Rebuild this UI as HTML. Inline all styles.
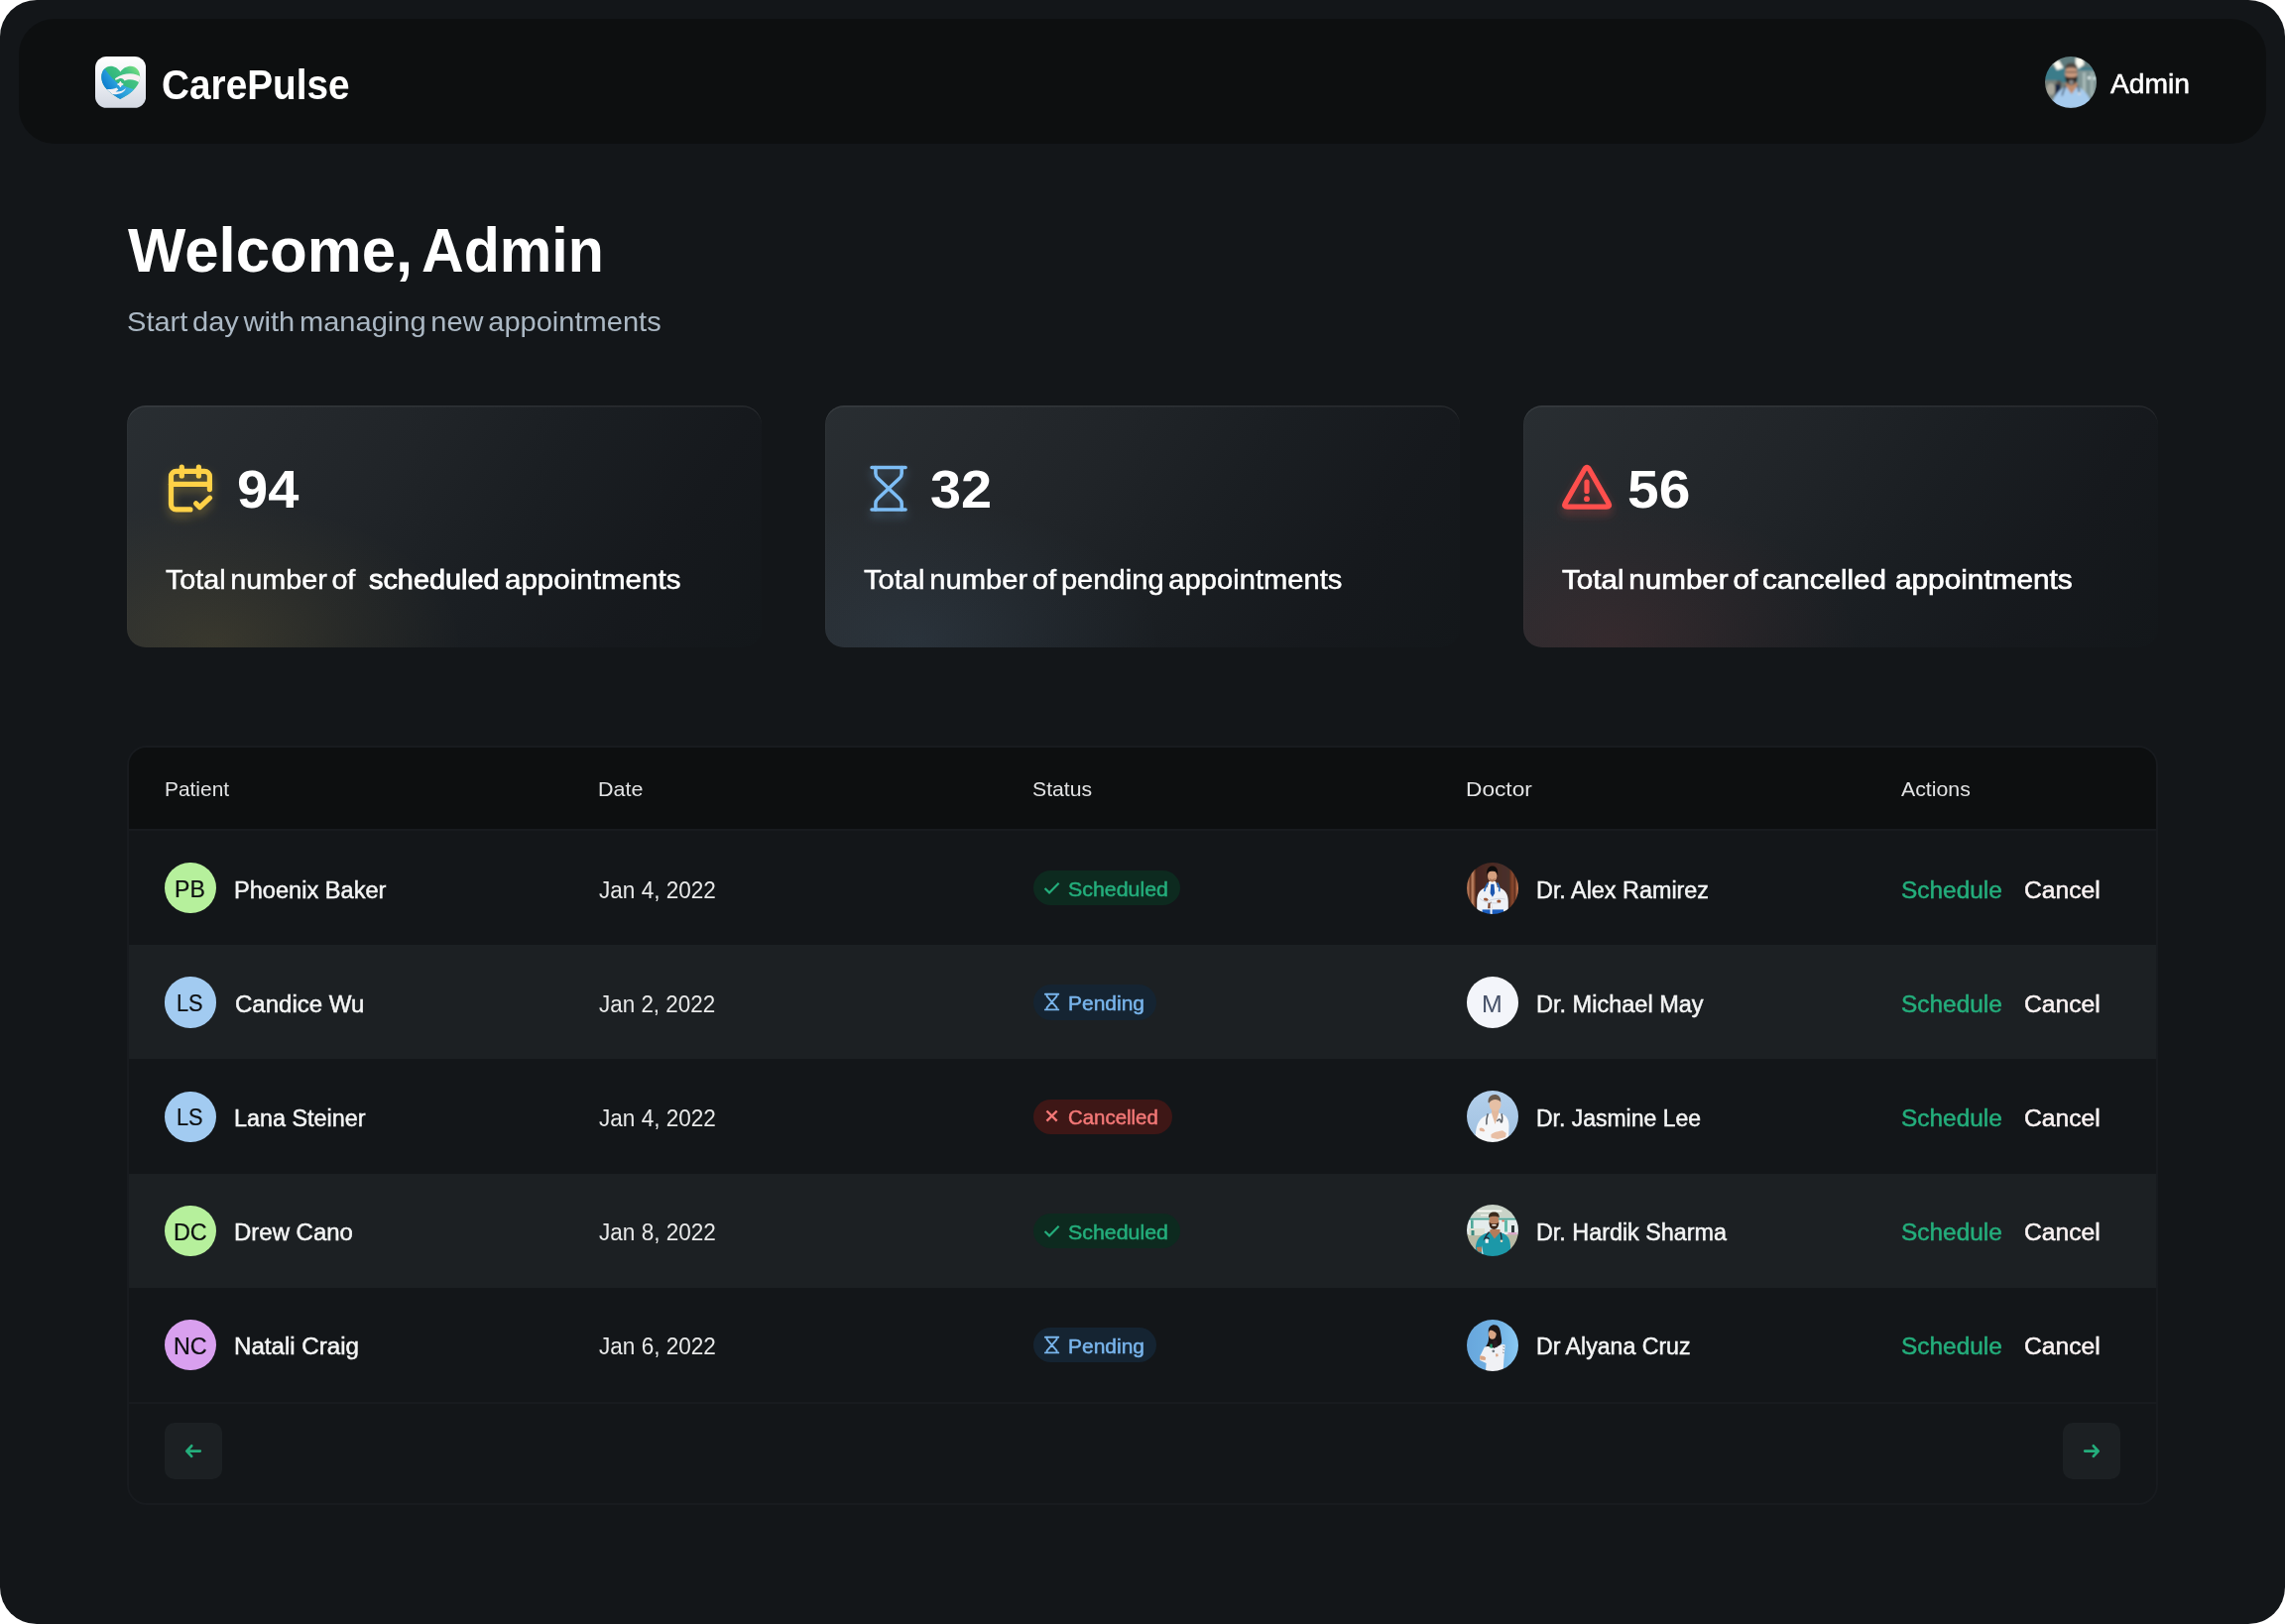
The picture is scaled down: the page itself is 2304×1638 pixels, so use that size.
<!DOCTYPE html>
<html lang="en">
<head>
<meta charset="utf-8">
<title>CarePulse Admin</title>
<style>
*{box-sizing:border-box;margin:0;padding:0}
html,body{width:2304px;height:1638px;background:#fff;overflow:hidden}
body{font-family:"Liberation Sans",sans-serif;color:#fff}
.abs{position:absolute}
#page{position:absolute;left:0;top:0;width:2304px;height:1638px;background:#131619;border-radius:37px;overflow:hidden}
#hdr{position:absolute;left:19px;top:19px;width:2266px;height:126px;background:#0D0F10;border-radius:36px}
.t{position:absolute;white-space:nowrap;line-height:1;transform-origin:0 0}
.card{position:absolute;top:409.3px;width:640px;height:243.4px;border-radius:19px;overflow:hidden;background:linear-gradient(122deg,#292E32 0%,#25292D 20%,#202428 40%,#1A1E22 60%,#16191D 80%,#13171A 100%)}
.card .glow{position:absolute;left:-160px;top:95px;width:500px;height:290px}
.card .hl{position:absolute;left:0;top:0;width:100%;height:100%;border-radius:19px;box-shadow:inset 0 1.6px 0 rgba(255,255,255,.075),inset 1px 0 0 rgba(255,255,255,.02)}
#tbl{position:absolute;left:128px;top:752px;width:2048px;height:766px;border-radius:20px;border:2px solid #181B1F;overflow:hidden;background:#131619}
#thead{position:absolute;left:0;top:0;width:100%;height:84px;background:#0D0F10;border-bottom:2px solid #181B1F}
.row{position:absolute;left:0;width:100%;height:115.4px}
.row.alt{background:#1C2023}
#tfoot{position:absolute;left:0;top:660px;width:100%;height:104px;border-top:2px solid #181B1F}
.av{position:absolute;width:51.2px;height:51.2px;border-radius:50%;overflow:hidden}
.badge{position:absolute;height:35.2px;border-radius:18px}
.btn{position:absolute;top:1434.8px;width:57.6px;height:57.6px;border-radius:10px;background:#1C2023}
</style>
</head>
<body>
<div id="page">
<div id="hdr"></div>
<svg class="abs" style="left:95.9px;top:57px" width="51.2" height="51.8" viewBox="0 0 51.2 51.8">
<defs>
<linearGradient id="lgbg" x1="0" y1="0" x2="0" y2="1"><stop offset="0" stop-color="#FFFFFF"/><stop offset="0.45" stop-color="#EEF0F5"/><stop offset="1" stop-color="#D3D8E2"/></linearGradient>
<linearGradient id="lgg" gradientUnits="userSpaceOnUse" x1="22" y1="30" x2="43" y2="10"><stop offset="0" stop-color="#2DB47B"/><stop offset="0.6" stop-color="#45C383"/><stop offset="1" stop-color="#7FE27F"/></linearGradient>
<linearGradient id="lgb" gradientUnits="userSpaceOnUse" x1="9" y1="36" x2="30" y2="22"><stop offset="0" stop-color="#0673CC"/><stop offset="0.6" stop-color="#2A9FDB"/><stop offset="1" stop-color="#3DB2E2"/></linearGradient>
<clipPath id="heartc"><path d="M25.4 42.9C19 39.6 6.3 32 6.3 20.8C6.3 14 10.6 9.8 15.6 9.8C19.8 9.8 23.2 12.2 25.4 15.6C27.6 12.2 31.4 9.8 36 9.8C41 9.8 45.2 14 45.2 20.6C45.2 31 33 39.4 25.4 42.9Z"/></clipPath>
</defs>
<rect x="0" y="0" width="51.2" height="51.8" rx="11.5" fill="url(#lgbg)"/>
<g clip-path="url(#heartc)">
<rect x="0" y="0" width="52" height="52" fill="url(#lgg)"/>
<path d="M9.9 12.4C15 20 20 25.5 25.4 28C30 30.3 35 32 39.6 33.2L46 36 30 50H0V8Z" fill="url(#lgb)"/>
<path d="M46 20.6C41 16.6 30.5 15.2 20.3 22C19.6 23.2 20.4 24 21.6 23.5C23.2 22.6 24.6 21.9 26 21.9C27.8 21.9 28.8 23 29.5 24.4C34 22.3 40.5 22.6 46 27.4Z" fill="#F7F0F2"/>
<path d="M3 31.2C9 33.6 16.5 33.6 21.6 31.5L23.4 33.4 20.6 35.5C24.4 35.8 28.2 34.7 30.9 32C29.8 36.4 23.5 39.6 13.5 37.9L6 42Z" fill="#F1F0F4"/>
<path d="M25.4 25.1 26.3 27.1 28.3 28 26.3 28.9 25.4 30.9 24.5 28.9 22.5 28 24.5 27.1Z" fill="#F7F0F2" stroke="#F7F0F2" stroke-width="0.9" stroke-linejoin="round"/>
</g>
</svg>

<svg class="abs" style="left:2062.3px;top:57.3px" width="52" height="52" viewBox="0 0 52 52">
<defs><clipPath id="cav0"><circle cx="26" cy="26" r="26"/></clipPath><filter id="bl0" x="-10%" y="-10%" width="120%" height="120%"><feGaussianBlur stdDeviation="0.85"/></filter></defs>
<g clip-path="url(#cav0)"><g filter="url(#bl0)">
<rect x="-2" y="-2" width="56" height="56" fill="#3B7B8A"/>
<rect x="-2" y="-2" width="56" height="13" fill="#5E7C7E"/>
<rect x="-2" y="26" width="56" height="28" fill="#6F7E7B"/>
<rect x="33" y="14" width="21" height="30" fill="#7F9494"/><rect x="38" y="16" width="3" height="24" fill="#A9BBB9"/><rect x="46" y="16" width="2.5" height="24" fill="#A3B5B3"/>
<rect x="-2" y="24" width="14" height="24" fill="#77807A"/><ellipse cx="6" cy="33" rx="4.5" ry="6" fill="#A9A79C"/><ellipse cx="14" cy="27" rx="2.6" ry="3" fill="#5A534C"/>
<path d="M8.3 6.5 14 3.7 18.6 11.5 12 13.8Z" fill="#FCFCF2"/>
<path d="M30.8 1.3 38 1.5 39.7 8 33.5 12.5 31 9Z" fill="#FCFCF2"/>
<circle cx="44.5" cy="21.5" r="1.6" fill="#EAF6F6"/><circle cx="50" cy="22" r="1.5" fill="#DFF3F3"/>
<rect x="10" y="28" width="6" height="12" fill="#1E2A44"/>
<path d="M6.9 52C7 42 12 35 20.5 30.5L26.5 29 33 30.5C41 34 47 42 47.2 52Z" fill="#A6CBEE"/>
<path d="M20.8 29.5 26.8 38 32.8 29.5 32 26H21.6Z" fill="#BF8B6B"/>
<ellipse cx="26.5" cy="16.5" rx="6.3" ry="8.6" fill="#C99A7E"/>
<path d="M20.2 13C20 8 23 6.6 26.6 6.6C30.4 6.6 33 8.4 32.8 13C31 10.6 22 10.6 20.2 13Z" fill="#4E4641"/>
<path d="M20.5 19.5C22 21.5 31 21.5 32.6 19.5C33 25 30 29 26.5 29C23 29 20 25 20.5 19.5Z" fill="#2A201C"/>
<rect x="24.3" y="24" width="4.4" height="4.5" fill="#8A8A8A"/>
<path d="M20.6 15.7H32.6" stroke="#2B2523" stroke-width="0.9"/>
<path d="M21 29.5C19.5 33 17.5 36 17.3 39.5M32.6 29.5C34 32 34.6 34 34.6 36.5" stroke="#27364A" stroke-width="1.3" fill="none"/>
<circle cx="34.6" cy="37.4" r="1.4" fill="#D8DCE0"/>
</g></g></svg>

<svg width="0" height="0" style="position:absolute"><defs>
<filter id="gy" x="-40%" y="-40%" width="180%" height="200%"><feDropShadow dx="0" dy="5" stdDeviation="5" flood-color="#FFD147" flood-opacity="0.33"/></filter>
<filter id="gb" x="-40%" y="-40%" width="180%" height="200%"><feDropShadow dx="0" dy="5" stdDeviation="5" flood-color="#79B5EC" flood-opacity="0.33"/></filter>
<filter id="gr" x="-40%" y="-40%" width="180%" height="200%"><feDropShadow dx="0" dy="5" stdDeviation="5" flood-color="#FF4F4E" flood-opacity="0.33"/></filter>
</defs></svg>
<div class="card" style="left:128px"><div class="glow" style="background:radial-gradient(ellipse 50% 50% at 50% 50%,rgba(255,209,71,.10),rgba(255,209,71,.04) 55%,rgba(255,209,71,0) 100%)"></div><div class="hl"></div></div>
<div class="card" style="left:832px"><div class="glow" style="background:radial-gradient(ellipse 50% 50% at 50% 50%,rgba(121,181,236,.085),rgba(121,181,236,.035) 55%,rgba(121,181,236,0) 100%)"></div><div class="hl"></div></div>
<div class="card" style="left:1536px"><div class="glow" style="background:radial-gradient(ellipse 50% 50% at 50% 50%,rgba(255,79,78,.085),rgba(255,79,78,.035) 55%,rgba(255,79,78,0) 100%)"></div><div class="hl"></div></div>
<svg class="abs" style="left:0;top:400px" width="2304" height="200" viewBox="0 400 2304 200" fill="none" stroke-linecap="round" stroke-linejoin="round">
<g stroke="#FFD147" stroke-width="5.2" filter="url(#gy)"><path d="M183.3 471.2V480M200.4 471.2V480"/><path d="M211.4 493.6V480.6a5.2 5.2 0 0 0-5.2-5.2H177.7a5.2 5.2 0 0 0-5.2 5.2V508.7a5.2 5.2 0 0 0 5.2 5.2H191.9"/><path d="M172.5 488.3H211.4"/><path d="M197.6 507.8 201.5 511.6 211.6 502.2"/></g>
<g stroke="#7DBDF5" stroke-width="3.5" filter="url(#gb)"><path d="M879 471.4H913.1M879 514.1H913.1"/><path d="M882.9 471.4V477.5Q882.9 480.5 885.2 482.5L896 492.75 906.9 482.5Q909.2 480.5 909.2 477.5V471.4"/><path d="M882.9 514.1V508Q882.9 505 885.2 503L896 492.75 906.9 503Q909.2 505 909.2 508V514.1"/></g>
<g stroke="#FF4F4E" stroke-width="5.2" filter="url(#gr)"><path d="M1580.53 511.1H1619.67Q1624 511.1 1621.86 507.34L1602.68 473.72Q1600.1 469.2 1597.52 473.72L1578.35 507.34Q1576.2 511.1 1580.53 511.1Z"/><path d="M1600 486.2V495.4"/><path d="M1600 503.2h.01" stroke-width="5.8"/></g>
</svg>

<div id="tbl">
<div id="thead"></div>
<div class="row alt" style="top:199px;height:115px"></div>
<div class="row alt" style="top:429.5px;height:115px"></div>
<div id="tfoot"></div>
</div>
<div class="btn" style="left:166.4px"></div>
<div class="btn" style="left:2080px"></div>
<svg class="abs" style="left:0;top:1430px" width="2304" height="70" viewBox="0 1430 2304 70" fill="none" stroke="#24AE7C" stroke-width="2.7" stroke-linecap="round" stroke-linejoin="round">
<path d="M201.8 1463.55H188.6M193.2 1458.3 188.3 1463.55 193.2 1468.8"/>
<path d="M2102.2 1463.55H2115.4M2110.8 1458.3 2115.7 1463.55 2110.8 1468.8"/>
</svg>

<div class="av" style="left:166.4px;top:870.2px;background:#B6F09C"></div>
<div class="badge" style="left:1041.6px;top:878.2px;width:148.8px;background:#0D2A1F"></div>
<svg class="abs" style="left:1051px;top:886.2px" width="19.2" height="19.2" viewBox="0 0 12 12"><path d="M1.6 6.3 4.4 9 10.4 2.9" fill="none" stroke="#24AE7C" stroke-width="1.35"/></svg>
<div class="av" style="left:166.4px;top:985.4px;background:#A2CBF1"></div>
<div class="badge" style="left:1041.6px;top:993.4px;width:124.7px;background:#152432"></div>
<svg class="abs" style="left:1051.2px;top:1001.4px" width="19.2" height="19.2" viewBox="0 0 12 12"><path d="M1.8 1.1h8.4M1.8 10.9h8.4M2.9 1.1v1.3L6 6 9.1 2.4V1.1M2.9 10.9V9.6L6 6l3.1 3.6v1.3" fill="none" stroke="#79B5EC" stroke-width="1.15" stroke-linejoin="round" stroke-linecap="round"/></svg>
<div class="av" style="left:166.4px;top:1100.6px;background:#A2CBF1"></div>
<div class="badge" style="left:1041.6px;top:1108.6px;width:140.8px;background:#3E1716"></div>
<svg class="abs" style="left:1051.2px;top:1116.1px" width="19.2" height="19.2" viewBox="0 0 12 12"><path d="M2.8 2.8 9.2 9.2M9.2 2.8 2.8 9.2" fill="none" stroke="#F37877" stroke-width="1.5"/></svg>
<div class="av" style="left:166.4px;top:1215.8px;background:#B6F09C"></div>
<div class="badge" style="left:1041.6px;top:1223.8px;width:148.8px;background:#0D2A1F"></div>
<svg class="abs" style="left:1051px;top:1231.8px" width="19.2" height="19.2" viewBox="0 0 12 12"><path d="M1.6 6.3 4.4 9 10.4 2.9" fill="none" stroke="#24AE7C" stroke-width="1.35"/></svg>
<div class="av" style="left:166.4px;top:1331.0px;background:#D9A0EF"></div>
<div class="badge" style="left:1041.6px;top:1339.0px;width:124.7px;background:#152432"></div>
<svg class="abs" style="left:1051.2px;top:1347.0px" width="19.2" height="19.2" viewBox="0 0 12 12"><path d="M1.8 1.1h8.4M1.8 10.9h8.4M2.9 1.1v1.3L6 6 9.1 2.4V1.1M2.9 10.9V9.6L6 6l3.1 3.6v1.3" fill="none" stroke="#79B5EC" stroke-width="1.15" stroke-linejoin="round" stroke-linecap="round"/></svg>
<svg width="0" height="0" style="position:absolute"><defs><clipPath id="cav"><circle cx="26" cy="26" r="26"/></clipPath><filter id="bl" x="-10%" y="-10%" width="120%" height="120%"><feGaussianBlur stdDeviation="0.7"/></filter><filter id="bl6" x="-10%" y="-10%" width="120%" height="120%"><feGaussianBlur stdDeviation="0.6"/></filter>
<linearGradient id="wood" x1="0" y1="0" x2="1" y2="0"><stop offset="0" stop-color="#8E5236"/><stop offset="0.06" stop-color="#B97A58"/><stop offset="0.1" stop-color="#6E3A24"/><stop offset="0.14" stop-color="#C48A68"/><stop offset="0.18" stop-color="#7A4028"/><stop offset="0.2" stop-color="#45261F"/><stop offset="0.5" stop-color="#4C2B24"/><stop offset="0.8" stop-color="#48302C"/><stop offset="0.82" stop-color="#6A3420"/><stop offset="0.86" stop-color="#8A4A30"/><stop offset="0.9" stop-color="#5E2E1E"/><stop offset="0.95" stop-color="#C87850"/><stop offset="1" stop-color="#D8825A"/></linearGradient>
<linearGradient id="sky3" x1="0" y1="0" x2="0" y2="1"><stop offset="0" stop-color="#B4D0EC"/><stop offset="1" stop-color="#9FC0E0"/></linearGradient>
<linearGradient id="sky5" x1="0" y1="0" x2="1" y2="0"><stop offset="0" stop-color="#67A6DC"/><stop offset="0.6" stop-color="#72B2E4"/><stop offset="1" stop-color="#8CCBF4"/></linearGradient>
</defs></svg>
<!-- Alex Ramirez -->
<svg class="abs" style="left:1478.8px;top:870px" width="52" height="52" viewBox="0 0 52 52"><g clip-path="url(#cav)"><g filter="url(#bl6)">
<rect x="-2" y="-2" width="56" height="56" fill="url(#wood)"/>
<path d="M10.2 52V40C10.2 32 12.5 27 20 24.8L25.6 22.4 31.4 24.8C39 27 41.8 32 41.8 40V52Z" fill="#EEF1F6"/>
<path d="M22.4 19H29L30.6 23.6 25.9 32 21 23.6Z" fill="#F6F8FB"/>
<path d="M24.3 21.8H27.5L28.2 31 25.9 34.8 23.6 31Z" fill="#1A56B0"/>
<path d="M21.4 20.5C19.6 23.5 17.6 26.6 17.9 29.2M30.6 20.5C32.4 23.5 33.6 26.6 32.6 29.2" stroke="#2F6FC0" stroke-width="1.7" fill="none"/>
<ellipse cx="25.7" cy="13.6" rx="4.7" ry="5.8" fill="#D5A07F"/>
<path d="M20.3 13.2C19.4 6 22.6 3.5 25.7 3.5C29 3.5 32 6 31.1 13.2C30.6 10 29.6 8.8 25.7 8.8C21.8 8.8 20.8 10 20.3 13.2Z" fill="#0E0A09"/>
<path d="M22.6 15.6C24 17.4 27.4 17.4 28.8 15.6C28.6 18.4 27.4 19.6 25.7 19.6C24 19.6 22.8 18.4 22.6 15.6Z" fill="#A9775A"/>
<path d="M17 36.2C18.6 35.4 20.6 35.8 21.4 37.2L21 38.8 17.4 38.6Z" fill="#9A5636"/>
<path d="M30.4 38.2C31.8 37.2 33.6 37.4 34.4 38.6L34 40.4 30.6 40.6Z" fill="#9A5636"/>
<path d="M21.6 40.2 25 39.8 25.4 46.2 21.2 46.2Z" fill="#7A4028"/>
<path d="M13 36.4C18 40 24 41.4 31 40.8M38.6 37C33 35.6 27 36.6 21.4 38.8" stroke="#C9CFDA" stroke-width="0.9" fill="none"/>
<path d="M15.6 47.4H37V53H15.6Z" fill="#1E5EC0"/>
<path d="M23.6 41.2H25.6V53H23.6Z" fill="#F2F4F8"/>
</g></g></svg>
<!-- Michael May -->
<div class="av" style="left:1479px;top:985.4px;width:52px;height:52px;background:#F3F5FA"></div>
<!-- Jasmine Lee -->
<svg class="abs" style="left:1479px;top:1100.3px" width="52" height="52" viewBox="0 0 52 52"><g clip-path="url(#cav)"><g filter="url(#bl)">
<rect x="-2" y="-2" width="56" height="56" fill="url(#sky3)"/>
<path d="M8 52 9 42C10 34 13 27 21 24.5L28 21 35 23.5C40 25 42.5 29 42.5 36L42 52Z" fill="#F5F6F8"/>
<path d="M25 19H32.4L32.2 23 28.6 34 25.2 23.5Z" fill="#E3B99D"/>
<ellipse cx="28.6" cy="14.2" rx="5.9" ry="6.6" fill="#E6C0A5"/>
<path d="M21.6 12C21 6.6 24.5 3.9 28 3.9C31.6 3.9 34.8 6.4 34.2 11.6C32 7.8 24.4 8 22.6 12.5Z" fill="#6B5A4E"/>
<path d="M21.3 23.2C20 27 19.6 31 19.9 34.4" stroke="#5A5F66" stroke-width="1.5" fill="none"/>
<path d="M35 23.2C35.8 26 36 28 35.6 30.5C35 33 34 32 34 30C33 28 31 29.5 30.6 31.2" stroke="#5A5F66" stroke-width="1.5" fill="none"/>
<path d="M12.6 38.4C14 36.8 17 37.4 18.3 40.6L17 41.4 13 40.4Z" fill="#E2B297"/>
<path d="M24.4 44.5C27 41.5 33 41 36 40.2L39.8 43 39 47 31 49 24.6 47.6Z" fill="#E8BFA5"/>
</g></g></svg>
<!-- Hardik Sharma -->
<svg class="abs" style="left:1479px;top:1215.3px" width="52" height="52" viewBox="0 0 52 52"><g clip-path="url(#cav)"><g filter="url(#bl)">
<rect x="-2" y="-2" width="56" height="56" fill="#C9D3C8"/>
<rect x="-2" y="13" width="56" height="18" fill="#E4ECEC"/>
<rect x="-2" y="30" width="56" height="24" fill="#B7BAA4"/>
<rect x="-2" y="13.6" width="56" height="1.8" fill="#48A394"/>
<rect x="10.4" y="5.6" width="25" height="1.7" fill="#FBFBF4"/>
<rect x="14" y="10" width="8" height="1.4" fill="#F1F3EC"/>
<rect x="4" y="15.5" width="2.6" height="14" fill="#4DA899"/><rect x="38" y="15.5" width="3" height="12" fill="#63B8A8"/>
<rect x="35.5" y="15.6" width="2.2" height="1.6" fill="#E0604A"/>
<rect x="45" y="21" width="3" height="8" fill="#2E3A3A"/><rect x="41.5" y="28" width="9" height="2.4" fill="#D9A8C8"/>
<rect x="2" y="24" width="16" height="7" fill="#DDE0D2"/><rect x="4.5" y="26" width="3" height="5" fill="#3B8A80"/>
<path d="M8.5 52 9 42C10 35 13.5 30.5 21 28.6L27.7 27 35 28.6C41.5 30.5 43.6 35 44 42L44.4 52Z" fill="#1F98A8"/>
<path d="M23.6 25 33.4 25 33.6 28 27.9 34.6 23 27.6Z" fill="#B47C5A"/>
<ellipse cx="27.4" cy="16.4" rx="4.9" ry="6.6" fill="#B8805E"/>
<path d="M22.1 13.6C21.6 9 24.4 7.6 27.4 7.6C30.6 7.6 33.2 9.2 32.7 13.6C31.4 11.2 23.6 11.2 22.1 13.6Z" fill="#3A2A1E"/>
<path d="M22.6 17.5C24 20 31 20 32.3 17.5C32.6 22 30.4 25 27.4 25C24.4 25 22.2 22 22.6 17.5Z" fill="#3A2418"/>
<rect x="25.2" y="19.9" width="4.6" height="1.5" rx="0.7" fill="#F4EEE8"/>
<path d="M22.6 27.5C20.5 30 18.6 32 18 34.2C19.6 32.6 21.6 33 22.4 35M34 28C34.8 31 35 33.6 35 36" stroke="#272C38" stroke-width="1.4" fill="none"/>
<rect x="18.6" y="34.7" width="3.2" height="4" rx="0.5" fill="#EEF1F4"/>
<circle cx="35" cy="36.8" r="1.3" fill="#E6DCC0"/>
<path d="M9.6 43 14.6 42.4 15.4 47.8 11 47.6Z" fill="#B47C5A"/>
<path d="M15 41 17 52H15Z" fill="#BFE2E8"/>
</g></g></svg>
<!-- Alyana Cruz -->
<svg class="abs" style="left:1479px;top:1330.5px" width="52" height="52" viewBox="0 0 52 52"><g clip-path="url(#cav)"><g filter="url(#bl)">
<rect x="-2" y="-2" width="56" height="56" fill="url(#sky5)"/>
<path d="M21.8 12C21.4 7.4 24.6 5.2 27.6 5.2C31.4 5.2 33.6 8.4 34 13C34.4 17 35.6 20 35 23.4L31.6 29 24 29.5 18.6 27.8C20.4 25.5 22 23 22 19Z" fill="#1B1518"/>
<path d="M17.8 27.8C20 26.4 23 27 25.6 28.6L31 27C34 25 37.6 24.2 38.6 25.6L37.4 40 36.6 52H19L19.6 44 13.2 41 13 37.6Z" fill="#F0F1F5"/>
<ellipse cx="25.8" cy="14.6" rx="3.9" ry="5.2" fill="#D9A585"/>
<path d="M22 10.5C23 8 27 7.6 29.6 9.8L30 14C28 11.6 25 10 22 10.5Z" fill="#1B1518"/>
<path d="M23.4 24.6H25.7V28.6H23.4Z" fill="#1E9A6A"/>
<path d="M26 21 30.5 20.5 31.2 27.2 27 29Z" fill="#2A1C20"/>
<circle cx="26.8" cy="31.8" r="1.4" fill="#6E7880"/>
<path d="M13 36.8C15 36 18 36.6 19.2 38.6L18.6 41 13.4 40.6Z" fill="#D9A585"/>
<path d="M29 34.6 31.4 34.4 31.6 37 29.4 37.4Z" fill="#D9A585"/>
<path d="M36.4 27 38 27.5M36.2 30 37.8 30.6M36 33 37.6 33.6" stroke="#6A7078" stroke-width="0.8"/>
</g></g></svg>

<div><span class="t" style="left:162.98px;top:65.34px;font-size:41.6px;transform:scaleX(0.9321);color:#FFFFFF;font-weight:700;">CarePulse</span></div>
<div><span class="t" style="left:2128.48px;top:69.79px;font-size:28.2px;transform:scaleX(1.0023);color:#FFFFFF;-webkit-text-stroke:0.55px #FFFFFF;">Admin</span></div>
<div><span class="t" style="left:129.20px;top:221.09px;font-size:62.5px;transform:scaleX(0.9884);color:#FFFFFF;font-weight:700;">Welcome,</span> <span class="t" style="left:425.22px;top:221.09px;font-size:62.5px;transform:scaleX(0.9451);color:#FFFFFF;font-weight:700;">Admin</span></div>
<div><span class="t" style="left:127.55px;top:311.14px;font-size:27.6px;transform:scaleX(1.0528);color:#ABB8C4;word-spacing:-3.2px;">Start day with managing new appointments</span></div>
<div><span class="t" style="left:239.37px;top:466.23px;font-size:54px;transform:scaleX(1.0367);color:#FFFFFF;font-weight:700;">94</span></div>
<div><span class="t" style="left:938.32px;top:466.23px;font-size:54px;transform:scaleX(1.0349);color:#FFFFFF;font-weight:700;">32</span></div>
<div><span class="t" style="left:1641.26px;top:466.23px;font-size:54px;transform:scaleX(1.0537);color:#FFFFFF;font-weight:700;">56</span></div>
<div><span class="t" style="left:167.17px;top:570.72px;font-size:27.6px;transform:scaleX(1.0411);color:#FFFFFF;word-spacing:-3.2px;-webkit-text-stroke:0.45px #FFFFFF;">Total number of</span> <span class="t" style="left:371.57px;top:570.72px;font-size:27.6px;transform:scaleX(1.0457);color:#FFFFFF;-webkit-text-stroke:0.8px #FFFFFF;">scheduled</span> <span class="t" style="left:509.03px;top:570.72px;font-size:27.6px;transform:scaleX(1.0708);color:#FFFFFF;-webkit-text-stroke:0.5px #FFFFFF;">appointments</span></div>
<div><span class="t" style="left:870.76px;top:570.72px;font-size:27.6px;transform:scaleX(1.0564);color:#FFFFFF;word-spacing:-3.2px;-webkit-text-stroke:0.45px #FFFFFF;">Total number of pending appointments</span></div>
<div><span class="t" style="left:1574.78px;top:570.72px;font-size:27.6px;transform:scaleX(1.0728);color:#FFFFFF;word-spacing:-3.2px;-webkit-text-stroke:0.65px #FFFFFF;">Total number of cancelled</span> <span class="t" style="left:1911.41px;top:570.72px;font-size:27.6px;transform:scaleX(1.0789);color:#FFFFFF;-webkit-text-stroke:0.65px #FFFFFF;">appointments</span></div>
<div><span class="t" style="left:165.64px;top:785.69px;font-size:20.8px;transform:scaleX(1.0049);color:#E2E3E4;">Patient</span></div>
<div><span class="t" style="left:603.18px;top:785.69px;font-size:20.8px;transform:scaleX(1.0330);color:#E2E3E4;">Date</span></div>
<div><span class="t" style="left:1041.49px;top:785.69px;font-size:20.8px;transform:scaleX(1.0190);color:#E2E3E4;">Status</span></div>
<div><span class="t" style="left:1477.82px;top:785.69px;font-size:20.8px;transform:scaleX(1.0912);color:#E2E3E4;">Doctor</span></div>
<div><span class="t" style="left:1917.00px;top:785.69px;font-size:20.8px;transform:scaleX(1.0236);color:#E2E3E4;">Actions</span></div>
<div><span class="t" style="left:176.34px;top:885.88px;font-size:23px;transform:scaleX(1.0040);color:#0D0F10;-webkit-text-stroke:0.2px #0D0F10;">PB</span></div>
<div><span class="t" style="left:235.73px;top:886.04px;font-size:24.7px;transform:scaleX(0.9555);color:#F4F5F5;-webkit-text-stroke:0.5px #F4F5F5;">Phoenix Baker</span></div>
<div><span class="t" style="left:604.30px;top:886.04px;font-size:24.7px;transform:scaleX(0.9138);color:#E8E9E9;">Jan 4, 2022</span></div>
<div><span class="t" style="left:1548.75px;top:886.04px;font-size:24.7px;transform:scaleX(0.9468);color:#F4F5F5;-webkit-text-stroke:0.5px #F4F5F5;">Dr. Alex Ramirez</span></div>
<div><span class="t" style="left:1916.58px;top:886.04px;font-size:24.7px;transform:scaleX(0.9895);color:#24AE7C;-webkit-text-stroke:0.5px #24AE7C;">Schedule</span></div>
<div><span class="t" style="left:2041.17px;top:886.04px;font-size:24.7px;transform:scaleX(0.9987);color:#FAF3F3;-webkit-text-stroke:0.5px #FAF3F3;">Cancel</span></div>
<div><span class="t" style="left:1076.69px;top:886.22px;font-size:21px;transform:scaleX(1.0177);color:#24AE7C;-webkit-text-stroke:0.5px #24AE7C;">Scheduled</span></div>
<div><span class="t" style="left:177.89px;top:1001.23px;font-size:23px;transform:scaleX(0.9474);color:#0D0F10;-webkit-text-stroke:0.2px #0D0F10;">LS</span></div>
<div><span class="t" style="left:236.92px;top:1001.19px;font-size:24.7px;transform:scaleX(0.9735);color:#F4F5F5;-webkit-text-stroke:0.5px #F4F5F5;">Candice Wu</span></div>
<div><span class="t" style="left:604.33px;top:1001.19px;font-size:24.7px;transform:scaleX(0.9086);color:#E8E9E9;">Jan 2, 2022</span></div>
<div><span class="t" style="left:1548.64px;top:1001.19px;font-size:24.7px;transform:scaleX(0.9528);color:#F4F5F5;-webkit-text-stroke:0.5px #F4F5F5;">Dr. Michael May</span></div>
<div><span class="t" style="left:1916.58px;top:1001.19px;font-size:24.7px;transform:scaleX(0.9895);color:#24AE7C;-webkit-text-stroke:0.5px #24AE7C;">Schedule</span></div>
<div><span class="t" style="left:2041.17px;top:1001.19px;font-size:24.7px;transform:scaleX(0.9987);color:#FAF3F3;-webkit-text-stroke:0.5px #FAF3F3;">Cancel</span></div>
<div><span class="t" style="left:1076.97px;top:1001.42px;font-size:21px;transform:scaleX(0.9992);color:#79B5EC;-webkit-text-stroke:0.5px #79B5EC;">Pending</span></div>
<div><span class="t" style="left:177.89px;top:1115.93px;font-size:23px;transform:scaleX(0.9474);color:#0D0F10;-webkit-text-stroke:0.2px #0D0F10;">LS</span></div>
<div><span class="t" style="left:235.93px;top:1115.84px;font-size:24.7px;transform:scaleX(0.9463);color:#F4F5F5;-webkit-text-stroke:0.5px #F4F5F5;">Lana Steiner</span></div>
<div><span class="t" style="left:604.30px;top:1115.84px;font-size:24.7px;transform:scaleX(0.9138);color:#E8E9E9;">Jan 4, 2022</span></div>
<div><span class="t" style="left:1548.98px;top:1115.84px;font-size:24.7px;transform:scaleX(0.9304);color:#F4F5F5;-webkit-text-stroke:0.5px #F4F5F5;">Dr. Jasmine Lee</span></div>
<div><span class="t" style="left:1916.58px;top:1115.84px;font-size:24.7px;transform:scaleX(0.9895);color:#24AE7C;-webkit-text-stroke:0.5px #24AE7C;">Schedule</span></div>
<div><span class="t" style="left:2041.17px;top:1115.84px;font-size:24.7px;transform:scaleX(0.9987);color:#FAF3F3;-webkit-text-stroke:0.5px #FAF3F3;">Cancel</span></div>
<div><span class="t" style="left:1077.34px;top:1116.07px;font-size:21px;transform:scaleX(0.9720);color:#F37877;-webkit-text-stroke:0.5px #F37877;">Cancelled</span></div>
<div><span class="t" style="left:174.50px;top:1231.63px;font-size:23px;transform:scaleX(1.0148);color:#0D0F10;-webkit-text-stroke:0.2px #0D0F10;">DC</span></div>
<div><span class="t" style="left:235.56px;top:1231.24px;font-size:24.7px;transform:scaleX(0.9710);color:#F4F5F5;-webkit-text-stroke:0.5px #F4F5F5;">Drew Cano</span></div>
<div><span class="t" style="left:604.30px;top:1231.24px;font-size:24.7px;transform:scaleX(0.9138);color:#E8E9E9;">Jan 8, 2022</span></div>
<div><span class="t" style="left:1548.73px;top:1231.24px;font-size:24.7px;transform:scaleX(0.9454);color:#F4F5F5;-webkit-text-stroke:0.5px #F4F5F5;">Dr. Hardik Sharma</span></div>
<div><span class="t" style="left:1916.58px;top:1231.24px;font-size:24.7px;transform:scaleX(0.9895);color:#24AE7C;-webkit-text-stroke:0.5px #24AE7C;">Schedule</span></div>
<div><span class="t" style="left:2041.17px;top:1231.24px;font-size:24.7px;transform:scaleX(0.9987);color:#FAF3F3;-webkit-text-stroke:0.5px #FAF3F3;">Cancel</span></div>
<div><span class="t" style="left:1076.69px;top:1231.82px;font-size:21px;transform:scaleX(1.0177);color:#24AE7C;-webkit-text-stroke:0.5px #24AE7C;">Scheduled</span></div>
<div><span class="t" style="left:174.50px;top:1347.23px;font-size:23px;transform:scaleX(1.0148);color:#0D0F10;-webkit-text-stroke:0.2px #0D0F10;">NC</span></div>
<div><span class="t" style="left:235.53px;top:1346.19px;font-size:24.7px;transform:scaleX(0.9766);color:#F4F5F5;-webkit-text-stroke:0.5px #F4F5F5;">Natali Craig</span></div>
<div><span class="t" style="left:604.30px;top:1346.19px;font-size:24.7px;transform:scaleX(0.9138);color:#E8E9E9;">Jan 6, 2022</span></div>
<div><span class="t" style="left:1548.80px;top:1346.19px;font-size:24.7px;transform:scaleX(0.9370);color:#F4F5F5;-webkit-text-stroke:0.5px #F4F5F5;">Dr Alyana Cruz</span></div>
<div><span class="t" style="left:1916.58px;top:1346.19px;font-size:24.7px;transform:scaleX(0.9895);color:#24AE7C;-webkit-text-stroke:0.5px #24AE7C;">Schedule</span></div>
<div><span class="t" style="left:2041.17px;top:1346.19px;font-size:24.7px;transform:scaleX(0.9987);color:#FAF3F3;-webkit-text-stroke:0.5px #FAF3F3;">Cancel</span></div>
<div><span class="t" style="left:1076.97px;top:1346.93px;font-size:21px;transform:scaleX(0.9992);color:#79B5EC;-webkit-text-stroke:0.5px #79B5EC;">Pending</span></div>
<div><span class="t" style="left:1494.10px;top:1002.01px;font-size:23.5px;transform:scaleX(1.0594);color:#475269;">M</span></div>
</div>
</body>
</html>
